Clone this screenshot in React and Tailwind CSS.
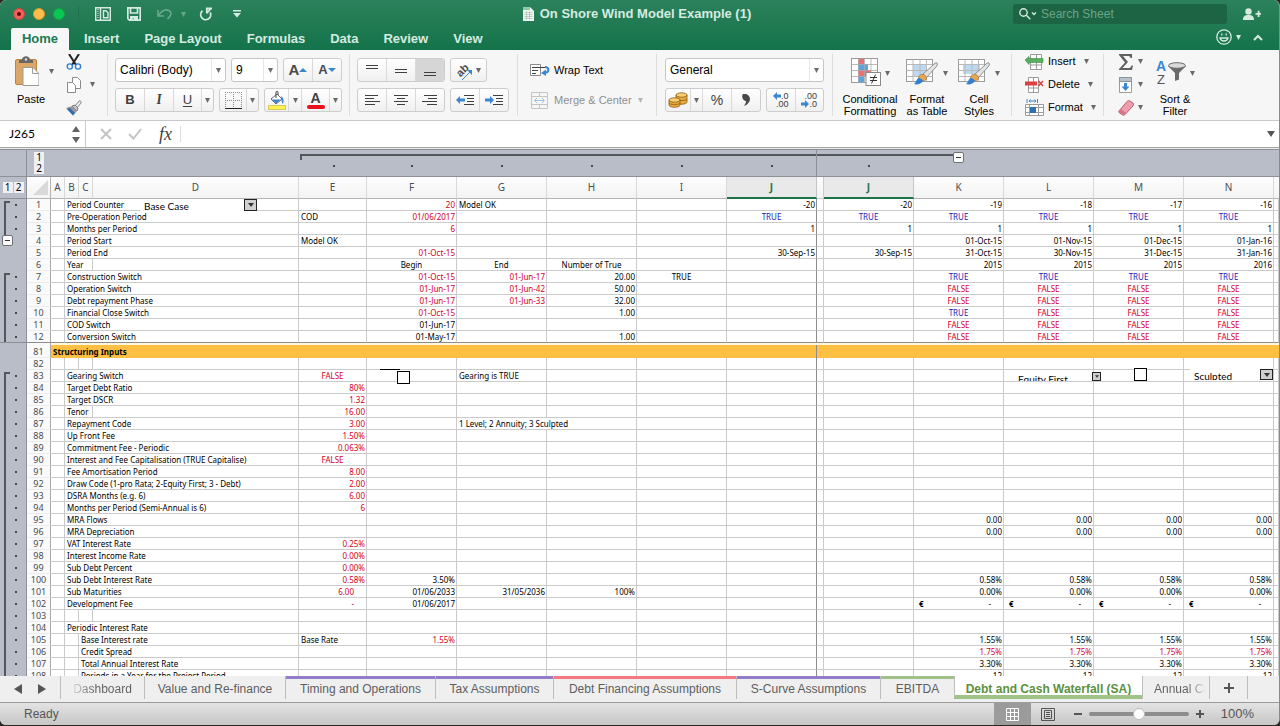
import clsx from 'clsx';

const TRUE4 = ['TRUE', 'TRUE', 'TRUE', 'TRUE'];
const FALSE4 = ['FALSE', 'FALSE', 'FALSE', 'FALSE'];

const red = (t, align = 'right') => ({ t, tone: 'red', align });
const num = (t) => ({ t, align: 'right' });
const mid = (t, tone) => ({ t, tone, align: 'center' });
const txt = (t) => ({ t, align: 'left' });
const bool = (t) => mid(t, t === 'TRUE' ? 'blue' : 'red');
const euro = { t: '-', align: 'euro' };

// K..N share the same formula in most rows
const series = (values, make = num) => ({
  K: make(values[0]), L: make(values[1]), M: make(values[2]), N: make(values[3]),
});
const same = (value, make = num) => series([value, value, value, value], make);

const FROZEN = [
  { n: 1, group: 'start', label: 'Period Counter', combo: 'base', cells: { F: red('20'), G: txt('Model OK'), J: num('-20'), J2: num('-20'), ...series(['-19', '-18', '-17', '-16']) } },
  { n: 2, group: 'in', label: 'Pre-Operation Period', cells: { E: txt('COD'), F: red('01/06/2017'), J: bool('TRUE'), J2: bool('TRUE'), ...series(TRUE4, bool) } },
  { n: 3, group: 'in', label: 'Months per Period', cells: { F: red('6'), J: num('1'), J2: num('1'), ...same('1') } },
  { n: 4, group: 'toggle', label: 'Period Start', cells: { E: txt('Model OK'), ...series(['01-Oct-15', '01-Nov-15', '01-Dec-15', '01-Jan-16']) } },
  { n: 5, label: 'Period End', cells: { F: red('01-Oct-15'), J: num('30-Sep-15'), J2: num('30-Sep-15'), ...series(['31-Oct-15', '30-Nov-15', '31-Dec-15', '31-Jan-16']) } },
  { n: 6, label: 'Year', short: true, cells: { F: mid('Begin'), G: mid('End'), H: mid('Number of True'), ...series(['2015', '2015', '2015', '2016']) } },
  { n: 7, group: 'start', label: 'Construction Switch', cells: { F: red('01-Oct-15'), G: red('01-Jun-17'), H: num('20.00'), I: mid('TRUE'), ...series(TRUE4, bool) } },
  { n: 8, group: 'in', label: 'Operation Switch', cells: { F: red('01-Jun-17'), G: red('01-Jun-42'), H: num('50.00'), ...series(FALSE4, bool) } },
  { n: 9, group: 'in', label: 'Debt repayment Phase', cells: { F: red('01-Jun-17'), G: red('01-Jun-33'), H: num('32.00'), ...series(FALSE4, bool) } },
  { n: 10, group: 'in', label: 'Financial Close Switch', cells: { F: red('01-Oct-15'), H: num('1.00'), ...series(['TRUE', 'FALSE', 'FALSE', 'FALSE'], bool) } },
  { n: 11, group: 'in', label: 'COD Switch', cells: { F: num('01-Jun-17'), ...series(FALSE4, bool) } },
  { n: 12, group: 'in', last: true, label: 'Conversion Switch', cells: { F: num('01-May-17'), H: num('1.00'), ...series(FALSE4, bool) } },
];

const ROWS = [
  { n: 82, cells: {} },
  { n: 83, group: 'start', label: 'Gearing Switch', combo: 'gearing', cells: { E: mid('FALSE', 'red'), G: txt('Gearing is TRUE') } },
  { n: 84, group: 'in', label: 'Target Debt Ratio', cells: { E: red('80%') } },
  { n: 85, group: 'in', label: 'Target DSCR', cells: { E: red('1.32') } },
  { n: 86, group: 'in', label: 'Tenor', short: true, cells: { E: red('16.00') } },
  { n: 87, group: 'in', label: 'Repayment Code', cells: { E: red('3.00'), G: { ...txt('1 Level; 2 Annuity; 3 Sculpted'), span: 2 } } },
  { n: 88, group: 'in', label: 'Up Front Fee', cells: { E: red('1.50%') } },
  { n: 89, group: 'in', label: 'Commitment Fee - Periodic', cells: { E: red('0.063%') } },
  { n: 90, group: 'in', label: 'Interest and Fee Capitalisation (TRUE Capitalise)', cells: { E: mid('FALSE', 'red') } },
  { n: 91, group: 'in', label: 'Fee Amortisation Period', cells: { E: red('8.00') } },
  { n: 92, group: 'in', label: 'Draw Code (1-pro Rata; 2-Equity First; 3 - Debt)', cells: { E: red('2.00') } },
  { n: 93, group: 'in', label: 'DSRA Months (e.g. 6)', cells: { E: red('6.00') } },
  { n: 94, group: 'in', label: 'Months per Period (Semi-Annual is 6)', cells: { E: red('6') } },
  { n: 95, group: 'in', label: 'MRA Flows', cells: same('0.00') },
  { n: 96, group: 'in', label: 'MRA Depreciation', cells: same('0.00') },
  { n: 97, group: 'in', label: 'VAT Interest Rate', cells: { E: red('0.25%') } },
  { n: 98, group: 'in', label: 'Interest Income Rate', cells: { E: red('0.00%') } },
  { n: 99, group: 'in', label: 'Sub Debt Percent', cells: { E: red('0.00%') } },
  { n: 100, group: 'in', label: 'Sub Debt Interest Rate', cells: { E: red('0.58%'), F: num('3.50%'), ...same('0.58%') } },
  { n: 101, group: 'in', label: 'Sub Maturities', cells: { E: red('6.00', 'account'), F: num('01/06/2033'), G: num('31/05/2036'), H: num('100%'), ...same('0.00%') } },
  { n: 102, group: 'in', label: 'Development Fee', cells: { E: red('-', 'account'), F: num('01/06/2017'), K: euro, L: euro, M: euro, N: euro } },
  { n: 103, group: 'in', cells: {} },
  { n: 104, group: 'in', label: 'Periodic Interest Rate', cells: {} },
  { n: 105, group: 'in', label: 'Base Interest rate', indent: true, cells: { E: txt('Base Rate'), F: red('1.55%'), ...same('1.55%') } },
  { n: 106, group: 'in', label: 'Credit Spread', indent: true, cells: same('1.75%', red) },
  { n: 107, group: 'in', label: 'Total Annual Interest Rate', indent: true, cells: same('3.30%') },
  { n: 108, group: 'in', label: 'Periods in a Year for the Project Period', indent: true, cells: same('12') },
];

const COLUMNS = ['E', 'F', 'G', 'H', 'I', 'J', 'gap', 'J2', 'K', 'L', 'M', 'N', 'O'];
const OUTLINED = ['E', 'F', 'G', 'H', 'I', 'J', 'gap', 'J2'];

const SHEETS = [
  { name: 'Dashboard', width: 'w-[84px]', fade: 'left' },
  { name: 'Value and Re-finance', width: 'w-[141px]' },
  { name: 'Timing and Operations', width: 'w-[150px]', bar: 'bg-[#947dc8]' },
  { name: 'Tax Assumptions', width: 'w-[118px]', bar: 'bg-[#947dc8]' },
  { name: 'Debt Financing Assumptions', width: 'w-[183px]', bar: 'bg-[#f57a80]' },
  { name: 'S-Curve Assumptions', width: 'w-[144px]', bar: 'bg-[#947dc8]' },
  { name: 'EBITDA', width: 'w-[74px]', bar: 'bg-[#a0c188]' },
  { name: 'Debt and Cash Waterfall (SA)', width: 'w-[188px]', active: true },
  { name: 'Annual Cash', width: 'w-[68px]', fade: 'right' },
];

const Caret = ({ className = 'text-[#6a6a6a]' }) => (
  <svg viewBox="0 0 5 5" className={clsx('size-[5px] shrink-0', className)} aria-hidden="true">
    <path d="M0 0h5L2.500 5z" fill="currentColor" />
  </svg>
);

const Divider = () => <div className="mt-1 h-[62px] w-px shrink-0 bg-[#dedede]" />;

const Group = ({ className, children }) => (
  <div className={clsx('flex h-[24px] shrink-0 divide-x divide-[#d9d9d9] overflow-hidden rounded-[3px] border border-[#cdcdcd] bg-linear-to-b from-white to-[#f0f0f0]', className)}>
    {children}
  </div>
);

const Tool = ({ label, width = 'flex-1', active, children }) => (
  <button type="button" aria-label={label} className={clsx('flex items-center justify-center', width, active && 'bg-[#d6d6d6]')}>
    {children}
  </button>
);

const Dropdown = ({ label, value, className, well = 'w-[14px]' }) => (
  <div className={clsx('flex h-[24px] items-center rounded-[3px] border border-[#c6c6c6] bg-white', className)}>
    <select aria-label={label} className="h-full min-w-0 flex-1 appearance-none bg-transparent pl-1 text-xs text-black outline-none">
      <option>{value}</option>
    </select>
    <span className={clsx('flex h-full items-center justify-center border-l border-[#e6e6e6]', well)}><Caret /></span>
  </div>
);

const Lines = ({ rows }) => (
  <svg viewBox="0 0 16 14" className="h-[14px] w-4" stroke="#3f3f3f" strokeWidth="1" aria-hidden="true">
    {rows.map(([x1, x2, y], i) => <path key={i} d={`M${x1} ${y}.5H${x2}`} />)}
  </svg>
);

const Indent = ({ right }) => (
  <svg viewBox="0 0 18 12" className="h-3 w-[18px]" aria-hidden="true">
    <path d="M8 1.500h10M11 4.500h7M11 7.500h7M8 10.500h10" stroke="#3f3f3f" />
    <path d={right ? 'M9 6L5 2v2.500H0v3h5V10z' : 'M0 6l4-4v2.500h5v3H4V10z'} fill="#3b86d0" />
  </svg>
);

const BrushIcon = () => (
  <g>
    <path d="M31 5c1 1 0 3-1 4L20 20l-4-3L27 7c1-1 3-3 4-2z" fill="#e3e3e3" stroke="#777" strokeWidth=".8" />
    <path d="M15.500 16.500c2-1 5.500 1.500 5 4-.5 2-3 3-5 2l-3-2c0-2 1-3.500 3-4z" fill="#e8a552" stroke="#9a6a30" strokeWidth=".6" />
    <path d="M12.500 20c2 0 4 1.500 4.500 3-2 3-6 4-9 3 2-1 2.500-5 4.500-6z" fill="#2f7fd0" />
  </g>
);

const TableIcon = ({ fill }) => (
  <svg viewBox="0 0 33 30" className="h-[30px] w-[33px]" aria-hidden="true">
    <rect x=".5" y="1.500" width="26" height="22" fill="#fff" stroke="#9b9b9b" />
    <path d={fill} fill="#bcd8f3" />
    <path d="M.5 6.500h26M.5 12.500h26M.5 18.500h26M7 1.500v22M14 1.500v22M20.500 1.500v22" stroke="#b9b9b9" fill="none" />
    <BrushIcon />
  </svg>
);

const BigTool = ({ icon, lines, className }) => (
  <button type="button" className={clsx('flex shrink-0 flex-col items-center pt-2', className)}>
    <span className="flex items-center gap-1">{icon}<Caret /></span>
    <span className="mt-[5px] text-[11px] leading-3 text-black">{lines[0]}<br />{lines[1]}</span>
  </button>
);

const SmallTool = ({ icon, label, text }) => (
  <button type="button" aria-label={label} className="flex h-[23px] items-center gap-1 text-[11px] text-black">
    {icon}
    {text && <span className="mr-1">{text}</span>}
    <Caret />
  </button>
);

const TitleBar = () => (
  <div className="flex h-7 items-center text-[#d5ebe0]">
    <div className="flex flex-1 items-center pl-[13px]">
      <button type="button" aria-label="Close" className="flex size-3 items-center justify-center rounded-full border border-[#c9473f] bg-[#f4605a]">
        <span className="size-1 rounded-full bg-[#5a0b08]" />
      </button>
      <button type="button" aria-label="Minimise" className="ml-2 size-3 rounded-full border border-[#d99b2c] bg-[#fdbc4b]" />
      <button type="button" aria-label="Zoom window" className="ml-2 size-3 rounded-full border border-[#12a542] bg-[#0ac754]" />
      <span className="ml-[13px] h-4 w-px bg-[#1f7350]" />
      <button type="button" aria-label="File gallery" className="ml-4">
        <svg viewBox="0 0 16 14" className="h-[14px] w-4" fill="none" stroke="currentColor" strokeWidth="1.400">
          <path d="M.7.7h14.600v12.600H.7zM5.500 1v12M8.500 3.700h2.500l2 2v5H8.500z" />
          <path d="M3 2v10" strokeWidth="1.200" strokeDasharray="1 1" />
        </svg>
      </button>
      <button type="button" aria-label="Save" className="ml-4">
        <svg viewBox="0 0 14 14" className="size-[14px]" fill="none" stroke="currentColor" strokeWidth="1.700">
          <path d="M.8.8h12.400v12.400H2.500L.8 11.500z" />
          <path d="M3.500 1v5h7V1" />
          <path d="M3 9h8v4.500H7v-2H5.500v2H3z" fill="currentColor" stroke="none" />
        </svg>
      </button>
      <button type="button" aria-label="Undo" className="ml-4 flex items-center gap-2 text-[#69a68a]">
        <svg viewBox="0 0 16 12" className="h-3 w-4" fill="none" stroke="currentColor" strokeWidth="1.700">
          <path d="M1 2v6h6M1.500 7.500C5 2 9 1 12 2.500c3 2 2.500 5-1.500 8.500" />
        </svg>
        <Caret className="text-[#69a68a]" />
      </button>
      <button type="button" aria-label="Redo" className="ml-[13px]">
        <svg viewBox="0 0 14 14" className="size-[14px]" fill="none" stroke="currentColor" strokeWidth="1.800">
          <path d="M3.500 3.800A5 5 0 1 0 11.200 5.500" /><path d="M7.800 6.500V1.500H13M8 6L11.500 2" />
        </svg>
      </button>
      <button type="button" aria-label="Customise toolbar" className="ml-5">
        <svg viewBox="0 0 8 8" className="size-2" fill="currentColor"><path d="M0 0h8v1.500H0zM0 3h8L4 7.500z" /></svg>
      </button>
    </div>
    <h1 className="flex items-center gap-1.5 text-[13px] font-bold">
      <svg viewBox="0 0 11 14" className="h-[14px] w-[11px]" aria-hidden="true">
        <path d="M0 0h7l4 4v10H0z" fill="#f2f7f4" />
        <path d="M0 0h7v3H0z" fill="#8ecbaa" />
        <path d="M1.500 5.500h8M1.500 7.500h8M1.500 9.500h8M1.500 11.500h8M3.500 4.500v8M6.500 4.500v8" stroke="#a9bdb2" strokeWidth=".7" />
      </svg>
      On Shore Wind Model Example (1)
    </h1>
    <div className="flex flex-1 items-center justify-end pr-[18px]">
      <label className="flex h-5 w-[214px] items-center rounded-[3px] bg-[#1c6444] pl-1.5">
        <svg viewBox="0 0 18 12" className="h-3 w-[18px]" fill="none" stroke="currentColor" strokeWidth="1.400" aria-hidden="true">
          <circle cx="4.500" cy="4.500" r="3.700" /><path d="M7.300 7.300l4 4M13 4.500l2 2 2-2" />
        </svg>
        <input type="search" aria-label="Search Sheet" placeholder="Search Sheet" className="ml-1 min-w-0 flex-1 bg-transparent text-xs leading-4 outline-none placeholder:text-[#6ba488]" />
      </label>
      <button type="button" aria-label="Share" className="ml-4">
        <svg viewBox="0 0 18 13" className="h-[13px] w-[18px]" fill="currentColor">
          <circle cx="5.500" cy="3.500" r="3.200" /><path d="M0 12c0-4 2-5 5.500-5S11 8 11 12zM12.500 5h2.200V2.800h1.800V5H18v1.800h-1.500V9h-1.800V6.800h-2.200z" />
        </svg>
      </button>
    </div>
  </div>
);

const RibbonTabs = () => (
  <nav className="flex h-[22px] items-stretch gap-[25px] pl-[11px] text-[13px] font-bold text-[#d5ebe0]">
    <a href="#home" className="-mr-[10px] flex w-[58px] items-center justify-center rounded-t-xs bg-[#f7f7f7] text-[#1c7a50]">Home</a>
    <a href="#insert" className="flex items-center">Insert</a>
    <a href="#layout" className="flex items-center">Page Layout</a>
    <a href="#formulas" className="flex items-center">Formulas</a>
    <a href="#data" className="flex items-center">Data</a>
    <a href="#review" className="flex items-center">Review</a>
    <a href="#view" className="flex items-center">View</a>
    <div className="flex flex-1 items-center justify-end gap-3 pr-4 pb-1">
      <button type="button" aria-label="Feedback" className="flex items-center gap-1">
        <svg viewBox="0 0 16 16" className="size-4" fill="none" stroke="currentColor" strokeWidth="1.300">
          <circle cx="8" cy="8" r="7.200" /><path d="M4 9c1 4 7 4 8 0z" /><path d="M5.800 4.500v2M10.200 4.500v2" />
        </svg>
        <Caret className="text-[#d5ebe0]" />
      </button>
      <button type="button" aria-label="Collapse ribbon">
        <svg viewBox="0 0 10 7" className="h-[7px] w-[10px]" fill="none" stroke="currentColor" strokeWidth="2"><path d="M1 6l4-4 4 4" /></svg>
      </button>
    </div>
  </nav>
);

const Ribbon = () => (
  <div className="flex h-[71px] overflow-hidden border-b border-[#c9c9c9] bg-[#f6f6f6]">
    <div className="flex w-[107px] shrink-0 pl-2">
      <button type="button" className="flex w-[46px] flex-col items-center pt-[6px] text-[11px] text-black">
        <span className="flex w-full items-center justify-between pl-[7px]">
          <svg viewBox="0 0 24 30" className="h-[30px] w-6" aria-hidden="true">
            <rect x=".5" y="3.500" width="21" height="25" rx="1.500" fill="#dca765" stroke="#bd8640" />
            <path d="M4 7V4h3c0-5 8-5 8 0h3v3z" fill="#686868" /><circle cx="11" cy="3.500" r="1.200" fill="#ddd" />
            <path d="M8 11.500h10l6 6v12H8z" fill="#fff" stroke="#9b9b9b" /><path d="M17.500 11.500v6H24" fill="none" stroke="#9b9b9b" />
          </svg>
          <Caret />
        </span>
        <span className="mt-[5px] leading-4">Paste</span>
      </button>
      <div className="ml-3 flex flex-col">
        <button type="button" aria-label="Cut" className="flex h-[23px] items-center">
          <svg viewBox="0 0 16 16" className="size-4" fill="none">
            <path d="M3 0l7 11M13 0L6 11" stroke="#222" strokeWidth="2" />
            <circle cx="3.800" cy="12.500" r="2.600" stroke="#2f7fd0" strokeWidth="1.400" /><circle cx="12" cy="12.500" r="2.600" stroke="#2f7fd0" strokeWidth="1.400" />
          </svg>
        </button>
        <button type="button" aria-label="Copy" className="flex h-[23px] items-center gap-2">
          <svg viewBox="0 0 16 16" className="size-4" fill="#fff" stroke="#8a8a8a">
            <path d="M6.500.5h5l3 3v8h-8z" /><path d="M1.500 5.500h5l3 3v7h-8z" />
          </svg>
          <Caret />
        </button>
        <button type="button" aria-label="Format painter" className="flex h-[23px] items-center">
          <svg viewBox="0 0 16 16" className="size-4">
            <path d="M9 6l4-5c1-1 3 1 2 2l-4 5z" fill="#ececec" stroke="#888" /><path d="M6 6l3-1 3 3-1 3z" fill="#c9c9c9" stroke="#777" />
            <path d="M0 8l6-2 5 5-4 4.500z" fill="#999" /><path d="M1 9l3-1 5 5-2 2.500z" fill="#2f6fae" />
          </svg>
        </button>
      </div>
    </div>
    <Divider />

    <div className="flex shrink-0 flex-col gap-[6px] px-[7px] pt-2">
      <div className="flex gap-[5px]">
        <Dropdown label="Font" value="Calibri (Body)" className="w-[111px]" />
        <Dropdown label="Font size" value="9" className="w-[47px]" />
        <Group className="w-[59px]">
          <Tool label="Increase font size">
            <span className="text-[15px] font-bold text-[#4a4a4a]">A</span>
            <svg viewBox="0 0 8 4" className="h-1 w-2"><path d="M0 4h8L4 0z" fill="#3b86d0" /></svg>
          </Tool>
          <Tool label="Decrease font size">
            <span className="text-[13px] font-bold text-[#4a4a4a]">A</span>
            <svg viewBox="0 0 8 4" className="h-1 w-2"><path d="M0 0h8L4 4z" fill="#3b86d0" /></svg>
          </Tool>
        </Group>
      </div>
      <div className="flex gap-[5px] text-[13px] text-[#404040]">
        <Group className="w-[99px]">
          <Tool label="Bold" width="w-[29px]"><b>B</b></Tool>
          <Tool label="Italic" width="w-[29px]"><i className="font-serif font-bold">I</i></Tool>
          <Tool label="Underline" width="w-[28px]"><span className="underline underline-offset-2">U</span></Tool>
          <Tool label="Underline style"><Caret /></Tool>
        </Group>
        <Group className="w-[40px]">
          <Tool label="Borders" width="w-[27px]">
            <svg viewBox="0 0 17 17" className="size-[17px]" fill="none" stroke="#8b8b8b" strokeDasharray="1 1">
              <path d="M.5 0v16M8.500 0v16M16.500 0v16M0 .5h17M0 8.500h17" /><path d="M0 16.500h17" stroke="#222" strokeDasharray="none" />
            </svg>
          </Tool>
          <Tool label="Border style"><Caret /></Tool>
        </Group>
        <Group className="w-[78px]">
          <Tool label="Fill colour" width="w-[24px]">
            <svg viewBox="0 0 18 19" className="h-[19px] w-[18px]">
              <path d="M3 8l6-5 5 5-6 5z" fill="#fff" stroke="#666" /><path d="M4 8.500h9L8 12.500z" fill="#3b86d0" /><path d="M8 7V1c0-1 2-1 2 0v3" fill="none" stroke="#444" />
              <path d="M13 5c3 2 3 5 2 8-2-2-1-5-2-8z" fill="#3b86d0" /><rect x=".5" y="14.500" width="17" height="4" fill="#fff04f" stroke="#d5cd58" />
            </svg>
          </Tool>
          <Tool label="Fill colour options" width="w-[13px]"><Caret /></Tool>
          <Tool label="Font colour" width="w-[28px]">
            <span className="flex flex-col items-center">
              <span className="text-sm leading-[13px] font-bold">A</span>
              <span className="h-1 w-[18px] rounded-xs bg-[#e8101c]" />
            </span>
          </Tool>
          <Tool label="Font colour options"><Caret /></Tool>
        </Group>
      </div>
    </div>
    <Divider />

    <div className="flex w-[167px] shrink-0 flex-col gap-[6px] px-[7px] pt-2">
      <div className="flex gap-[5px]">
        <Group className="w-[88px]">
          <Tool label="Align top"><Lines rows={[[2, 14, 2], [2, 14, 5]]} /></Tool>
          <Tool label="Align middle"><Lines rows={[[2, 14, 6], [2, 14, 9]]} /></Tool>
          <Tool label="Align bottom" active><Lines rows={[[2, 14, 9], [2, 14, 12]]} /></Tool>
        </Group>
        <Group className="w-[37px]">
          <Tool label="Orientation">
            <span className="-rotate-45 text-[11px] font-bold text-[#4a4a4a]">ab</span>
            <svg viewBox="0 0 10 11" className="mt-2 mr-1 -ml-[7px] h-[11px] w-[10px]"><path d="M0 11L8 3" stroke="#3b86d0" /><path d="M10 1v5L5 1z" fill="#3b86d0" /></svg>
            <Caret />
          </Tool>
        </Group>
      </div>
      <div className="flex gap-[5px]">
        <Group className="w-[88px]">
          <Tool label="Align left"><Lines rows={[[1, 14, 2], [1, 10, 5], [1, 16, 8], [1, 11, 11]]} /></Tool>
          <Tool label="Centre"><Lines rows={[[1, 15, 2], [4, 12, 5], [1, 15, 8], [4, 12, 11]]} /></Tool>
          <Tool label="Align right"><Lines rows={[[2, 15, 2], [6, 15, 5], [0, 15, 8], [5, 15, 11]]} /></Tool>
        </Group>
        <Group className="w-[59px]">
          <Tool label="Decrease indent"><Indent /></Tool>
          <Tool label="Increase indent"><Indent right /></Tool>
        </Group>
      </div>
    </div>
    <Divider />

    <div className="flex w-[138px] shrink-0 flex-col gap-[6px] pt-2 pl-3 text-[11px]">
      <button type="button" className="flex h-[24px] items-center gap-1 text-black">
        <svg viewBox="0 0 20 14" className="h-[14px] w-5" fill="none">
          <path d="M.5 1.500h10v11H.5z" fill="#fff" stroke="#8a8a8a" /><path d="M2 4.500h13M2 7.500h6M2 10.500h4" stroke="#444" />
          <path d="M15 4c4 0 5 5 0 6" stroke="#3b86d0" strokeWidth="2" /><path d="M11 10l5-3.500V13z" fill="#3b86d0" />
        </svg>
        Wrap Text
      </button>
      <button type="button" disabled className="flex h-[24px] items-center gap-1 text-[#8f8f8f]">
        <svg viewBox="0 0 20 17" className="h-[17px] w-5" fill="none" stroke="#c4c4c4">
          <path d="M1.500.5h16v16h-16zM1.500 4.500h16M1.500 12.500h16M9.500.5v4M9.500 12.500v4" /><path d="M5 8.500h9M7 6L4.500 8.500 7 11M12 6l2.500 2.500L12 11" stroke="#9dc3e8" />
        </svg>
        <span>Merge &amp; Center</span>
        <Caret className="ml-0.5 text-[#b5b5b5]" />
      </button>
    </div>
    <Divider />

    <div className="flex w-[175px] shrink-0 flex-col gap-[6px] px-2 pt-2">
      <Dropdown label="Number format" value="General" className="w-[159px]" />
      <div className="flex gap-[5px] text-[#404040]">
        <Group className="w-[96px]">
          <Tool label="Accounting format" width="w-[25px]">
            <svg viewBox="0 0 20 16" className="h-4 w-5" fill="#e9a93c" stroke="#8a5a14" strokeWidth=".8">
              <path d="M8 3v7c0 3 11 3 11 0V3z" /><path d="M8 7c0 2 11 2 11 0" fill="none" /><ellipse cx="13.500" cy="3" rx="5.500" ry="2.200" fill="#f9cf72" />
              <path d="M1 8v5c0 3 11 3 11 0V8z" /><path d="M1 11c0 2 11 2 11 0" fill="none" /><ellipse cx="6.500" cy="8" rx="5.500" ry="2.200" fill="#f9cf72" />
            </svg>
          </Tool>
          <Tool label="Accounting options" width="w-[12px]"><Caret /></Tool>
          <Tool label="Percent style" width="w-[29px]"><span className="text-sm">%</span></Tool>
          <Tool label="Comma style">
            <svg viewBox="0 0 8 12" className="h-3 w-2"><path d="M1 0c4-1 7 2 7 5s-3 6-6 7c2-3 2-4 2-5C1 7-1 2 1 0z" fill="#484848" /></svg>
          </Tool>
        </Group>
        <Group className="w-[58px] text-[9px] leading-2">
          <Tool label="Increase decimal">
            <span className="flex flex-col items-end">
              <span className="flex items-center"><svg viewBox="0 0 8 8" className="size-2"><path d="M0 4l4-4v2.500h4v3H4V8z" fill="#3b86d0" /></svg>.0</span>
              <span>.00</span>
            </span>
          </Tool>
          <Tool label="Decrease decimal">
            <span className="flex flex-col items-end">
              <span>.00</span>
              <span className="flex items-center"><svg viewBox="0 0 8 8" className="size-2"><path d="M8 4L4 0v2.500H0v3h4V8z" fill="#3b86d0" /></svg>.0</span>
            </span>
          </Tool>
        </Group>
      </div>
    </div>
    <Divider />

    <div className="flex w-[178px] shrink-0 pl-[7px]">
      <BigTool
        className="w-[60px]"
        lines={['Conditional', 'Formatting']}
        icon={
          <svg viewBox="0 0 30 30" className="size-[30px]" aria-hidden="true">
            <rect x=".5" y=".5" width="26" height="24" fill="#fff" stroke="#9b9b9b" />
            <path d="M7 1h6v5H7zM7 12h13v6H7z" fill="#ee6f72" /><path d="M7 6h10v6H7zM7 18h6v6H7z" fill="#5ba5e4" />
            <path d="M.5 6.500h26M.5 12.500h26M.5 18.500h26M7.500.5v24M13.500.5v24M20 .5v24" stroke="#a9a9a9" strokeWidth=".8" fill="none" />
            <rect x="15" y="14.500" width="14.500" height="13" fill="#fff" stroke="#8a8a8a" />
            <path d="M19 19.500h7M19 22.500h7M24.500 16.500l-4 9" stroke="#333" />
          </svg>
        }
      />
      <BigTool className="ml-[3px] w-[48px]" lines={['Format', 'as Table']} icon={<TableIcon fill="M7 6h13.500v12.500H7z" />} />
      <BigTool className="ml-1 w-[48px]" lines={['Cell', 'Styles']} icon={<TableIcon fill="M5 6h17v10H5z" />} />
    </div>
    <Divider />

    <div className="flex w-[91px] shrink-0 flex-col pl-[13px]">
      <SmallTool text="Insert" icon={
        <svg viewBox="0 0 19 16" className="h-4 w-[19px]"><path d="M5.500.5h11v15h-11zM11.500.5v15M5.500 11h11" fill="#fff" stroke="#9b9b9b" /><path d="M0 6l4-3.500v2h14v4H4v2z" fill="#58ae5d" stroke="#3d8f45" strokeWidth=".6" /></svg>
      } />
      <SmallTool text="Delete" icon={
        <svg viewBox="0 0 19 16" className="h-4 w-[19px]"><path d="M3.500.5h10v15h-10zM8.500.5v15M3.500 11h10" fill="#fff" stroke="#9b9b9b" /><path d="M0 4.500h12v4H0z" fill="#d9403f" /><path d="M13.500 4l4.500 5M18 4l-4.500 5" stroke="#d9403f" strokeWidth="1.500" /></svg>
      } />
      <SmallTool text="Format" icon={
        <svg viewBox="0 0 19 17" className="h-[17px] w-[19px]"><path d="M.5 5.500h18v11H.5zM.5 8.500h18M.5 13.500h18M4.500 5.500v11M13.500 5.500v11" fill="#fff" stroke="#9b9b9b" /><path d="M5 8h6v6H5z" fill="#2f6fae" /><path d="M2 0v4M12.500 0v4M4 2h7M5.500.5L4 2l1.500 1.500M9.500.5L11 2 9.500 3.500" stroke="#3b86d0" fill="none" /></svg>
      } />
    </div>
    <Divider />

    <div className="flex shrink-0 pl-[14px]">
      <div className="flex w-[34px] flex-col">
        <SmallTool label="AutoSum" icon={
          <svg viewBox="0 0 16 16" className="size-4"><path d="M1 0h13v4h-1.500C12 2.500 11.500 2 10 2H5l5 6-5.500 6H11c1.500 0 2-1 2.500-2.500H15L14 16H1v-1l6-6.500L1 1z" fill="#616161" /></svg>
        } />
        <SmallTool label="Fill" icon={
          <svg viewBox="0 0 16 16" className="size-4"><path d="M1.500.5h12v15h-12z" fill="#fff" stroke="#9b9b9b" /><path d="M1.500.5h12v4h-12z" fill="#b9c2cb" stroke="#8a949d" /><path d="M6 6h3v3.500h2.500l-4 4.500-4-4.500H6z" fill="#3b86d0" /></svg>
        } />
        <SmallTool label="Clear" icon={
          <svg viewBox="0 0 16 16" className="size-4"><path d="M1 11L9 1.500c1-1 2-1 3-.5l3 2c1 1 .5 2 0 3L7 14.500c-1 1-2 1-3 0l-3-2c-.5-.5-.5-1 0-1.500z" fill="#ef9cab" stroke="#b55f70" /><path d="M3 9l5 4-1.500 2L1 12z" fill="#d97286" /></svg>
        } />
      </div>
      <BigTool
        className="w-[46px]"
        lines={['Sort &', 'Filter']}
        icon={
          <svg viewBox="0 0 30 30" className="size-[30px]" aria-hidden="true">
            <text x="0" y="13" fontSize="14" fontWeight="bold" fill="#3b86d0">A</text>
            <text x="1" y="26" fontSize="13" fill="#555">Z</text>
            <path d="M12 8l7 7v8l4-1.500V15l7-7z" fill="#6b6b6b" />
            <ellipse cx="21" cy="7.500" rx="8.500" ry="2.800" fill="#d9d9d9" stroke="#6b6b6b" />
          </svg>
        }
      />
    </div>
  </div>
);

const FormulaBar = () => (
  <div className="flex h-[27px] items-center border-b border-[#a9a9a9] bg-white">
    <div className="flex h-full w-[86px] items-center border-r border-[#c9c9c9]">
      <input aria-label="Name box" defaultValue="J265" className="w-16 bg-transparent pl-[9px] font-[Lato,sans-serif] text-xs text-black outline-none" />
      <span className="flex flex-col gap-[5px] pl-2">
        <button type="button" aria-label="Previous reference"><svg viewBox="0 0 8 6" className="h-[6px] w-2"><path d="M0 6h8L4 0z" fill="#636363" /></svg></button>
        <button type="button" aria-label="Next reference"><svg viewBox="0 0 8 6" className="h-[6px] w-2"><path d="M0 0h8L4 6z" fill="#636363" /></svg></button>
      </span>
    </div>
    <button type="button" aria-label="Cancel" className="ml-[14px]">
      <svg viewBox="0 0 12 12" className="size-3" stroke="#c4c4c4" strokeWidth="2"><path d="M1 1l10 10M11 1L1 11" /></svg>
    </button>
    <button type="button" aria-label="Enter" className="ml-4">
      <svg viewBox="0 0 14 12" className="h-3 w-[14px]" fill="none" stroke="#c4c4c4" strokeWidth="2"><path d="M1 6l4.500 4.500L13 1" /></svg>
    </button>
    <button type="button" aria-label="Insert function" className="ml-[17px] font-['Liberation_Serif',serif] text-lg leading-5 text-[#3f3f3f] italic">fx</button>
    <input aria-label="Formula" className="ml-2 h-4 min-w-0 flex-1 border-l border-[#dcdcdc] outline-none" />
    <button type="button" aria-label="Expand formula bar" className="pr-1">
      <svg viewBox="0 0 8 6" className="h-[6px] w-2"><path d="M0 0h8L4 6z" fill="#555" /></svg>
    </button>
  </div>
);

const ComboArrow = ({ small }) => (
  <span className={clsx('pointer-events-none flex shrink-0 items-center justify-center border border-[#222] bg-[#cfcfcf]', small ? 'h-[9px] w-[9px]' : 'h-full w-[13px]')}>
    <svg viewBox="0 0 6 4" className={small ? 'h-[3px] w-[4px]' : 'h-1 w-[6px]'}><path d="M0 0h6L3 4z" fill="#333" /></svg>
  </span>
);

const SheetCombo = ({ label, value, place, small }) => (
  <div className={clsx('absolute z-10 flex items-start overflow-hidden bg-white', place)}>
    <select aria-label={label} className="h-[14px] min-w-0 flex-1 appearance-none bg-transparent pl-1 font-[Lato,sans-serif] text-[10px] leading-[14px] text-black outline-none">
      <option>{value}</option>
    </select>
    <ComboArrow small={small} />
  </div>
);

const SheetCheck = ({ label, place }) => (
  <input type="checkbox" aria-label={label} className={clsx('absolute z-10 size-[13px] appearance-none border border-black bg-white', place)} />
);

const MinusBox = ({ label, className }) => (
  <button type="button" aria-label={label} className={clsx('flex size-[11px] shrink-0 items-center justify-center rounded-xs border border-[#6f7076] bg-white', className)}>
    <span className="h-px w-[5px] bg-[#333]" />
  </button>
);

const Gutter = ({ group, last }) => (
  <td className={clsx('relative border-r border-[#8f9097] bg-[#b9bdc8] p-0', last && 'border-b')}>
    <div className={clsx('flex items-center pl-1', last ? 'h-[11px]' : 'h-3')}>
      {group === 'toggle' && <MinusBox label="Collapse rows" className="absolute top-0 left-[2px]" />}
      {(group === 'start' || group === 'in') && (
        <>
          <span className={clsx('w-[6px] self-stretch border-l-2 border-[#54565c]', group === 'start' && 'mt-[2px] border-t-2')} />
          <span className="ml-[5px] size-[2px] bg-[#45474c]" />
        </>
      )}
    </div>
  </td>
);

const lineColor = (col) => (col === 'J' ? 'border-r-[#8d8d8d]' : 'border-r-[#cbcbcb]');

const Cell = ({ col, cell, last, children }) => (
  <td
    colSpan={cell?.span}
    className={clsx(
      'relative border-r border-b p-0 whitespace-nowrap',
      lineColor(col),
      last ? 'border-b-[#8d8d8d]' : 'border-b-[#cbcbcb]',
      cell?.tone === 'red' && 'text-[#d4001f]',
      cell?.tone === 'blue' && 'text-[#1c1cb0]',
      cell?.align === 'right' && 'pr-px text-right',
      cell?.align === 'account' && 'pr-3 text-right',
      cell?.align === 'center' && 'text-center',
      cell?.align === 'left' && 'pl-[2px]',
    )}
  >
    {cell?.align === 'euro' ? <span className="flex justify-between pr-3 pl-[5px]"><b>€</b>-</span> : cell?.t}
    {children}
  </td>
);

const RowHead = ({ n, last }) => (
  <th scope="row" className={clsx('border-r border-b border-r-[#a9a9a9] bg-[#fafafa] p-0 text-center text-[9px] font-normal text-[#4a4d52]', last ? 'border-b-[#8d8d8d]' : 'border-b-[#ececec]')}>{n}</th>
);

const Row = ({ row }) => {
  const { n, label, indent, short, last, cells, combo, group } = row;
  const edge = last ? 'border-b-[#8d8d8d]' : 'border-b-[#cbcbcb]';
  const plain = clsx('border-r border-b border-r-[#cbcbcb] p-0', edge);
  const skipped = cells.G?.span ? 'H' : null;

  return (
    <tr className="h-3">
      <Gutter group={group} last={last} />
      <RowHead n={n} last={last} />
      <td className={plain} />
      {(!label || indent) && <td className={plain} />}
      {!label && <td className={plain} />}
      {!label && <td className={plain} />}
      {label && (
        <td colSpan={indent || short ? 2 : 3} className={clsx(plain, 'relative pl-[2px] whitespace-nowrap')}>
          {label}
          {combo === 'base' && <SheetCombo label="Scenario" value="Base Case" place="top-0 left-[75px] h-3 w-[117px]" />}
        </td>
      )}
      {short && <td className={plain} />}
      {COLUMNS.filter(c => c !== skipped).map(c => (
        <Cell key={c} col={c} cell={cells[c]} last={last}>
          {combo === 'gearing' && c === 'F' && (
            <>
              <span className="absolute -top-px left-[13px] h-px w-5 bg-black" />
              <SheetCheck label="Gearing" place="top-px left-[30px]" />
            </>
          )}
          {combo === 'gearing' && c === 'L' && <SheetCombo small label="Draw order" value="Equity First" place="top-[2px] left-[10px] h-[9px] w-[87px]" />}
          {combo === 'gearing' && c === 'M' && <SheetCheck label="Draw option" place="-top-[2px] left-[40px]" />}
          {combo === 'gearing' && c === 'N' && <SheetCombo label="Repayment" value="Sculpted" place="-top-px left-[6px] h-[11px] w-[83px]" />}
        </Cell>
      ))}
    </tr>
  );
};

const HeadCell = ({ name, active }) => (
  <th scope="col" className={clsx('border-r p-0', active ? 'border-b-2 border-b-[#1f7246] bg-[#e9e9e9] font-bold text-[#1f7246]' : 'border-b border-b-[#b4b4b4] font-normal text-[#4a4d52]', name === 'J' ? 'border-r-[#c4c4c4]' : 'border-r-[#d9d9d9]')}>
    {name}
  </th>
);

const LevelButton = ({ children }) => (
  <button type="button" className="h-[11px] w-[10px] bg-[#f1f1f3] text-[10px] leading-[11px] text-black">{children}</button>
);

const Sheet = () => (
  <main className="min-h-0 flex-1 overflow-hidden border-t border-[#8f9097] bg-white">
    <table className="w-full table-fixed border-separate border-spacing-0 font-['Noto_Sans',sans-serif] text-[8px] leading-[11px] text-black">
      <colgroup>
        <col className="w-[27px]" />
        <col className="w-6" />
        <col className="w-[14px]" />
        <col className="w-[14px]" />
        <col className="w-[14px]" />
        <col className="w-[206px]" />
        <col className="w-[68px]" />
        <col className="w-[90px]" />
        <col className="w-[90px]" />
        <col className="w-[90px]" />
        <col className="w-[90px]" />
        <col className="w-[90px]" />
        <col className="w-[7px]" />
        <col className="w-[90px]" />
        <col className="w-[90px]" />
        <col className="w-[90px]" />
        <col className="w-[90px]" />
        <col className="w-[90px]" />
        <col />
      </colgroup>
      <thead>
        <tr className="h-[27px] bg-[#b9bdc8] *:border-b *:border-[#8f9097] *:p-0">
          <td className="border-r" />
          <td>
            <div className="flex flex-col items-center"><LevelButton>1</LevelButton><LevelButton>2</LevelButton></div>
          </td>
          <td colSpan={4} />
          {OUTLINED.map(c => (
            <td key={c} className={clsx('align-top', c === 'J' && 'border-r')}>
              <div className={clsx('mt-1 flex h-[13px] flex-col items-center border-t-2 border-[#54565c]', c === 'E' && 'ml-px')}>
                {c === 'E' && <span className="h-1 w-[2px] self-start bg-[#54565c]" />}
                {c !== 'gap' && <span className="mt-auto size-[2px] bg-[#45474c]" />}
              </div>
            </td>
          ))}
          <td className="align-top">
            <div className="mt-[2px] flex items-start">
              <span className="mt-[2px] h-[2px] w-[39px] bg-[#54565c]" />
              <MinusBox label="Collapse columns" />
            </div>
          </td>
          <td colSpan={4} />
        </tr>
        <tr className="h-[22px] bg-linear-to-b from-[#fdfdfd] to-[#f3f3f3] text-[10px]">
          <td className="border-r border-b border-[#8f9097] bg-[#b9bdc8] p-0">
            <div className="flex justify-center gap-px"><LevelButton>1</LevelButton><LevelButton>2</LevelButton></div>
          </td>
          <td className="border-r border-b border-[#b4b4b4] p-0">
            <svg viewBox="0 0 15 15" className="mr-[2px] ml-auto size-[15px]"><path d="M15 0v15H0z" fill="#d9d9d9" /></svg>
          </td>
          {['A', 'B', 'C', 'D', 'E', 'F', 'G', 'H', 'I'].map(c => <HeadCell key={c} name={c} />)}
          <HeadCell name="J" active />
          <td className="border-r border-b border-[#cbcbcb] p-0" />
          <HeadCell name="J" active />
          {['K', 'L', 'M', 'N'].map(c => <HeadCell key={c} name={c} />)}
          <td className="border-b border-[#b4b4b4] p-0" />
        </tr>
      </thead>
      <tbody>
        {FROZEN.map(row => <Row key={row.n} row={row} />)}
        <tr className="h-[2px] *:p-0">
          <td className="border-r border-[#8f9097] bg-[#b9bdc8]" />
          <td className="border-r border-[#a9a9a9] bg-[#fafafa]" />
          <td colSpan={17} className="bg-[#fff6dc]" />
        </tr>
        <tr className="h-[13px]">
          <Gutter />
          <RowHead n={81} />
          <td colSpan={10} className="border-r border-[#8d8d8d] bg-[#ffbf43] p-0 pl-[2px] font-bold">Structuring Inputs</td>
          <td colSpan={7} className="bg-[#ffbf43] p-0" />
        </tr>
        {ROWS.map(row => <Row key={row.n} row={row} />)}
      </tbody>
    </table>
  </main>
);

const SheetTabs = () => (
  <nav className="flex h-[27px] shrink-0 items-start border-b border-[#9c9c9c] bg-[#efefef] text-xs text-[#5e5e5e]">
    <div className="flex h-[25px] w-[60px] shrink-0 items-center gap-4 pl-[14px]">
      <button type="button" aria-label="Previous sheets"><svg viewBox="0 0 8 10" className="h-[10px] w-2"><path d="M8 0v10L0 5z" fill="#555" /></svg></button>
      <button type="button" aria-label="Next sheets"><svg viewBox="0 0 8 10" className="h-[10px] w-2"><path d="M0 0v10l8-5z" fill="#555" /></svg></button>
    </div>
    {SHEETS.map(({ name, width, bar, active, fade }) => (
      <a
        key={name}
        href={`#${name.toLowerCase().replace(/[^a-z]+/g, '-')}`}
        className={clsx(
          'flex h-[23px] shrink-0 flex-col items-center overflow-hidden border-l border-[#bdbdbd] whitespace-nowrap',
          width,
          active && 'border-b-4 border-b-[#a0c188] bg-white font-bold text-[#5b9140]',
          fade === 'right' && 'border-r',
        )}
      >
        <span className={clsx('h-[3px] w-full shrink-0', bar)} />
        <span className={clsx(
          'leading-5',
          fade === 'left' && 'bg-linear-to-r from-[#dcdcdc] to-[#5e5e5e] to-35% bg-clip-text text-transparent',
          fade === 'right' && 'ml-[11px] self-start bg-linear-to-r from-[#5e5e5e] from-50% to-[#efefef] to-75% bg-clip-text text-transparent',
        )}
        >
          {name}
        </span>
      </a>
    ))}
    <button type="button" aria-label="Add sheet" className="flex h-[23px] w-[38px] shrink-0 items-center justify-center border-r border-[#bdbdbd]">
      <svg viewBox="0 0 10 10" className="size-[10px]" stroke="#555" strokeWidth="2"><path d="M5 0v10M0 5h10" /></svg>
    </button>
  </nav>
);

const StatusBar = () => (
  <footer className="flex h-[22px] shrink-0 items-center bg-linear-to-b from-[#e3e3e3] to-[#c6c6c6] pr-[25px] text-xs text-[#555]">
    <span className="flex-1 pl-6">Ready</span>
    <button type="button" aria-label="Normal view" className="flex h-full w-[37px] items-center justify-center bg-[#9b9b9b]">
      <svg viewBox="0 0 13 13" className="size-[13px]" fill="none" stroke="#fff"><path d="M.5.5h12v12H.5zM.5 4.500h12M.5 8.500h12M4.500.5v12M8.500.5v12" /></svg>
    </button>
    <button type="button" aria-label="Page layout view" className="ml-[10px]">
      <svg viewBox="0 0 14 13" className="h-[13px] w-[14px]" fill="none" stroke="#555"><path d="M.5.5h13v12H.5zM3.500 2.500h7v8h-7zM5 4.500h4M5 6.500h4M5 8.500h4" /></svg>
    </button>
    <button type="button" aria-label="Zoom out" className="ml-[19px]"><svg viewBox="0 0 8 8" className="size-2" stroke="#555" strokeWidth="2"><path d="M0 4h8" /></svg></button>
    <input
      type="range"
      aria-label="Zoom"
      className="mx-[7px] h-1 w-[100px] appearance-none rounded-full bg-[#8d8d8d] [&::-webkit-slider-thumb]:size-3 [&::-webkit-slider-thumb]:appearance-none [&::-webkit-slider-thumb]:rounded-full [&::-webkit-slider-thumb]:border [&::-webkit-slider-thumb]:border-[#bbb] [&::-webkit-slider-thumb]:bg-white"
    />
    <button type="button" aria-label="Zoom in"><svg viewBox="0 0 8 8" className="size-2" stroke="#555" strokeWidth="2"><path d="M0 4h8M4 0v8" /></svg></button>
    <span className="ml-[17px] text-[13px]">100%</span>
  </footer>
);

const App = () => (
  <div className="h-screen bg-[#2b2724] pb-px font-['Liberation_Sans',Arial,sans-serif]">
    <div className="flex h-full flex-col overflow-hidden rounded-md border-r border-[#8a8a8a] bg-[#e9e9e9]">
      <header className="shrink-0 bg-linear-to-b from-[#2b815b] to-[#13734a]">
        <TitleBar />
        <RibbonTabs />
      </header>
      <div className="mb-px shrink-0">
        <Ribbon />
        <FormulaBar />
      </div>
      <Sheet />
      <SheetTabs />
      <StatusBar />
    </div>
  </div>
);

export default App;
